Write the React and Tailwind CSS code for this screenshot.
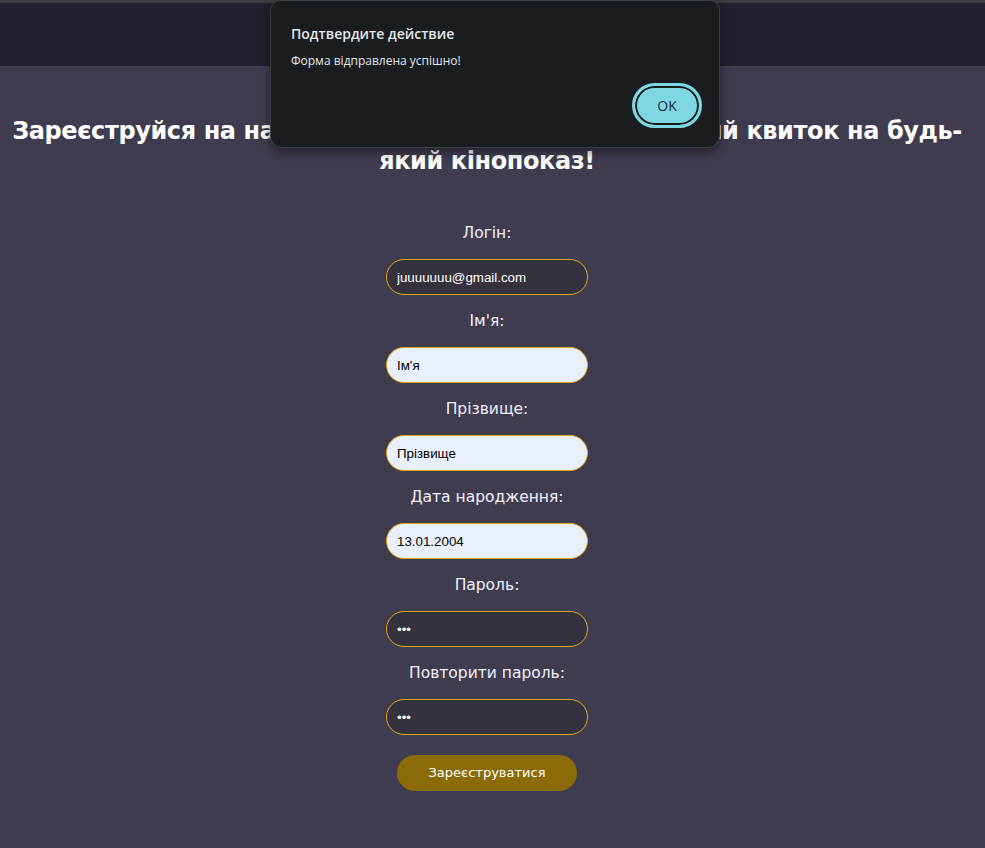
import React from 'react';

const fields = [
  { label: 'Логін:', value: 'juuuuuuu@gmail.com', type: 'text', light: false },
  { label: "Ім'я:", value: "Ім'я", type: 'text', light: true },
  { label: 'Прізвище:', value: 'Прізвище', type: 'text', light: true },
  { label: 'Дата народження:', value: '13.01.2004', type: 'text', light: true },
  { label: 'Пароль:', value: '123', type: 'password', light: false },
  { label: 'Повторити пароль:', value: '123', type: 'password', light: false },
];

const ConfirmDialog = () => {
  return (
    <div className="absolute left-[270px] top-0 w-[450px] h-[148px] rounded-b-[12px] rounded-t-[10px] bg-[#191d20] border border-[#3b4044] shadow-[0_4px_12px_rgba(0,0,0,0.45)] pl-5 pr-[17px] pt-[23px] font-['Open_Sans','Noto_Sans',sans-serif]">
      <div className="text-[14px] font-semibold text-[#e3e6ea] leading-5">Подтвердите действие</div>
      <div className="mt-[9px] text-[12px] text-[#e3e6ea] leading-4">Форма відправлена успішно!</div>
      <div className="flex justify-end mt-[14px]">
        <button className="w-[70px] h-[45px] rounded-full bg-[#7fd7e2] border-[3px] border-[#7fd7e2] ring-2 ring-inset ring-[#151a1d] text-[14px] text-[#1b2a33] flex items-center justify-center">
          OK
        </button>
      </div>
    </div>
  );
};

const App = () => {
  return (
    <div className="relative min-h-screen bg-[#403c50] font-['DejaVu_Sans',sans-serif]">
      <div className="h-[3px] bg-[#3c3c3c]" />
      <div className="h-[63px] bg-[#22212f]" />

      <div className="mr-[11px]">
        <h1 className="mt-[50px] text-center text-white font-bold text-[24px] leading-[30px] tracking-[-0.4px]">
          <span className="whitespace-nowrap">Зареєструйся на нашому сайті й отримай безплатний квиток на будь-</span>
          <br />
          <span className="whitespace-nowrap">який кінопоказ!</span>
        </h1>

        <form className="mt-[47px] flex flex-col items-center gap-4 pb-[57px]" onSubmit={(e) => e.preventDefault()}>
          {fields.map((f, i) => (
            <React.Fragment key={i}>
              <label className="h-5 leading-5 text-[15.5px] text-[#f1eff8]">{f.label}</label>
              <input
                type={f.type}
                value={f.value}
                readOnly
                className={`w-[202px] h-9 rounded-full border border-[#e3a90e] px-[10px] text-[13.33px] font-['Liberation_Sans',Arial,sans-serif] outline-none ${f.light ? 'bg-[#e8f0fe] text-black' : 'bg-[#36313f] text-white'}`}
              />
            </React.Fragment>
          ))}
          <button type="submit" className="mt-1 w-[180px] h-9 rounded-full bg-[#8b6a08] text-white text-[13px]">
            Зареєструватися
          </button>
        </form>
      </div>

      <ConfirmDialog />
    </div>
  );
};

export default App;
